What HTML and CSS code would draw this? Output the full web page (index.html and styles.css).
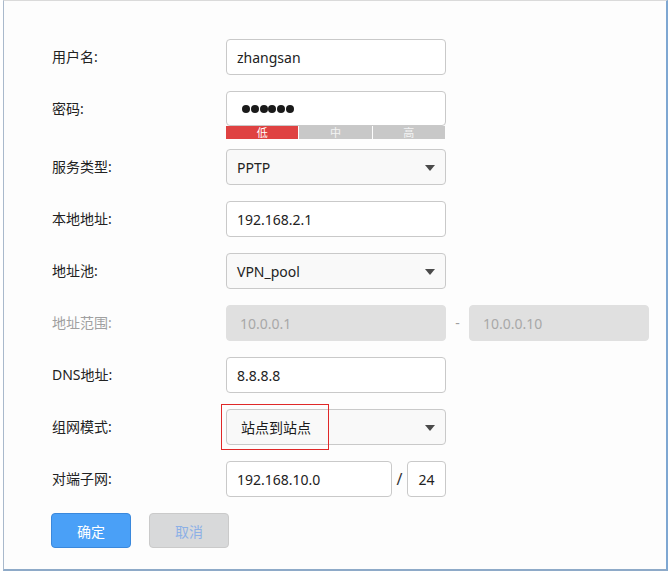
FILE: index.html
```html
<!DOCTYPE html>
<html lang="zh-CN">
<head>
<meta charset="utf-8">
<link rel="stylesheet" href="styles.css">
</head>
<body>
<div class="frame">
  <div class="row">
    <div class="label">用户名:</div>
    <div class="field">zhangsan</div>
  </div>
  <div class="row row-pwd">
    <div class="label">密码:</div>
    <div class="pwd-wrap">
      <div class="field field-pwd">
        <span class="dot"></span><span class="dot"></span><span class="dot"></span><span class="dot"></span><span class="dot"></span><span class="dot"></span>
      </div>
      <div class="strength">
        <span class="seg seg-on">低</span>
        <span class="seg">中</span>
        <span class="seg">高</span>
      </div>
    </div>
  </div>
  <div class="row">
    <div class="label">服务类型:</div>
    <div class="field select">PPTP<svg class="arrow" width="10" height="6" viewBox="0 0 10 6"><path d="M0 0H10L5 6Z" fill="#4a4a4a"/></svg></div>
  </div>
  <div class="row">
    <div class="label">本地地址:</div>
    <div class="field">192.168.2.1</div>
  </div>
  <div class="row">
    <div class="label">地址池:</div>
    <div class="field select">VPN_pool<svg class="arrow" width="10" height="6" viewBox="0 0 10 6"><path d="M0 0H10L5 6Z" fill="#4a4a4a"/></svg></div>
  </div>
  <div class="row">
    <div class="label label-disabled">地址范围:</div>
    <div class="field field-disabled">10.0.0.1</div>
    <div class="dash">-</div>
    <div class="field field-disabled field-end">10.0.0.10</div>
  </div>
  <div class="row">
    <div class="label">DNS地址:</div>
    <div class="field">8.8.8.8</div>
  </div>
  <div class="row">
    <div class="label">组网模式:</div>
    <div class="field select mode">站点到站点<svg class="arrow" width="10" height="6" viewBox="0 0 10 6"><path d="M0 0H10L5 6Z" fill="#4a4a4a"/></svg><span class="highlight"></span></div>
  </div>
  <div class="row">
    <div class="label">对端子网:</div>
    <div class="field field-net">192.168.10.0</div>
    <div class="slash">/</div>
    <div class="field field-mask">24</div>
  </div>
  <div class="actions">
    <button class="btn btn-primary">确定</button>
    <button class="btn btn-cancel">取消</button>
  </div>
</div>
</body>
</html>
```
FILE: styles.css
```css
html, body {
  margin: 0;
  padding: 0;
  background: #ffffff;
}
body {
  font-family: "Noto Sans", "Noto Sans CJK SC", sans-serif;
  font-size: 14px;
  color: #2a2a2a;
}
.frame {
  box-sizing: border-box;
  margin-left: 3px;
  width: 665px;
  height: 571px;
  border-top: 1px solid #dadada;
  border-left: 1px solid #a9b9cc;
  border-right: 2px solid #7ea7d2;
  border-bottom: 2px solid #8eaac8;
  background: #fdfdfd;
  padding: 38px 0 0 48px;
}
.row {
  display: flex;
  align-items: flex-start;
  margin-bottom: 16px;
}
.row-pwd {
  margin-bottom: 10px;
}
.label {
  width: 174px;
  flex: none;
  line-height: 36px;
  height: 36px;
  color: #222222;
}
.row-pwd .label {
  line-height: 35px;
}
.label-disabled {
  color: #a0a0a0;
}
.field {
  box-sizing: border-box;
  width: 220px;
  height: 36px;
  flex: none;
  border: 1px solid #c9c9c9;
  border-radius: 4px;
  background: #ffffff;
  padding: 0 10px;
  display: flex;
  align-items: center;
  color: #222222;
  position: relative;
}
.pwd-wrap {
  width: 220px;
  display: flex;
  flex-direction: column;
}
.field-pwd {
  height: 35px;
  padding-left: 15px;
  gap: 0.8px;
}
.dot {
  width: 8px;
  height: 8px;
  border-radius: 50%;
  background: #1a1a1a;
  flex: none;
}
.strength {
  display: flex;
  gap: 1px;
  height: 13px;
  width: 219px;
}
.seg {
  flex: 1;
  background: #c8c8c8;
  color: #f4f4f4;
  font-family: "Noto Sans CJK SC", sans-serif;
  font-size: 11px;
  line-height: 13px;
  text-align: center;
}
.seg-on {
  background: #df4242;
  color: #ffffff;
}
.select {
  background: #f9f9f9;
}
.arrow {
  position: absolute;
  right: 10px;
  top: 15px;
}
.mode {
  padding-left: 14px;
  color: #1a1a1a;
}
.highlight {
  position: absolute;
  left: -6px;
  top: -6px;
  width: 108px;
  height: 46px;
  box-sizing: border-box;
  border: 1px solid #e02828;
  pointer-events: none;
}
.field-disabled {
  background: #e0e0e0;
  border-color: #e0e0e0;
  color: #a8a8a8;
  padding-left: 13px;
}
.field-end {
  width: 180px;
}
.dash {
  width: 23px;
  text-align: center;
  line-height: 36px;
  color: #a0a0a0;
}
.field-net {
  width: 166px;
}
.slash {
  width: 15px;
  text-align: center;
  line-height: 36px;
  font-size: 16px;
  color: #333333;
}
.field-mask {
  width: 39px;
  padding: 0;
  justify-content: center;
}
.actions {
  display: flex;
  gap: 18px;
  margin-left: -1px;
}
.btn {
  box-sizing: border-box;
  width: 80px;
  height: 35px;
  border-radius: 4px;
  font-family: "Noto Sans CJK SC", sans-serif;
  font-size: 14px;
  padding: 0;
}
.btn-primary {
  background: #4aa0f7;
  border: 1px solid #3a88dc;
  color: #ffffff;
}
.btn-cancel {
  background: #d8d9da;
  border: 1px solid #cacaca;
  color: #8cb0e6;
}
```
